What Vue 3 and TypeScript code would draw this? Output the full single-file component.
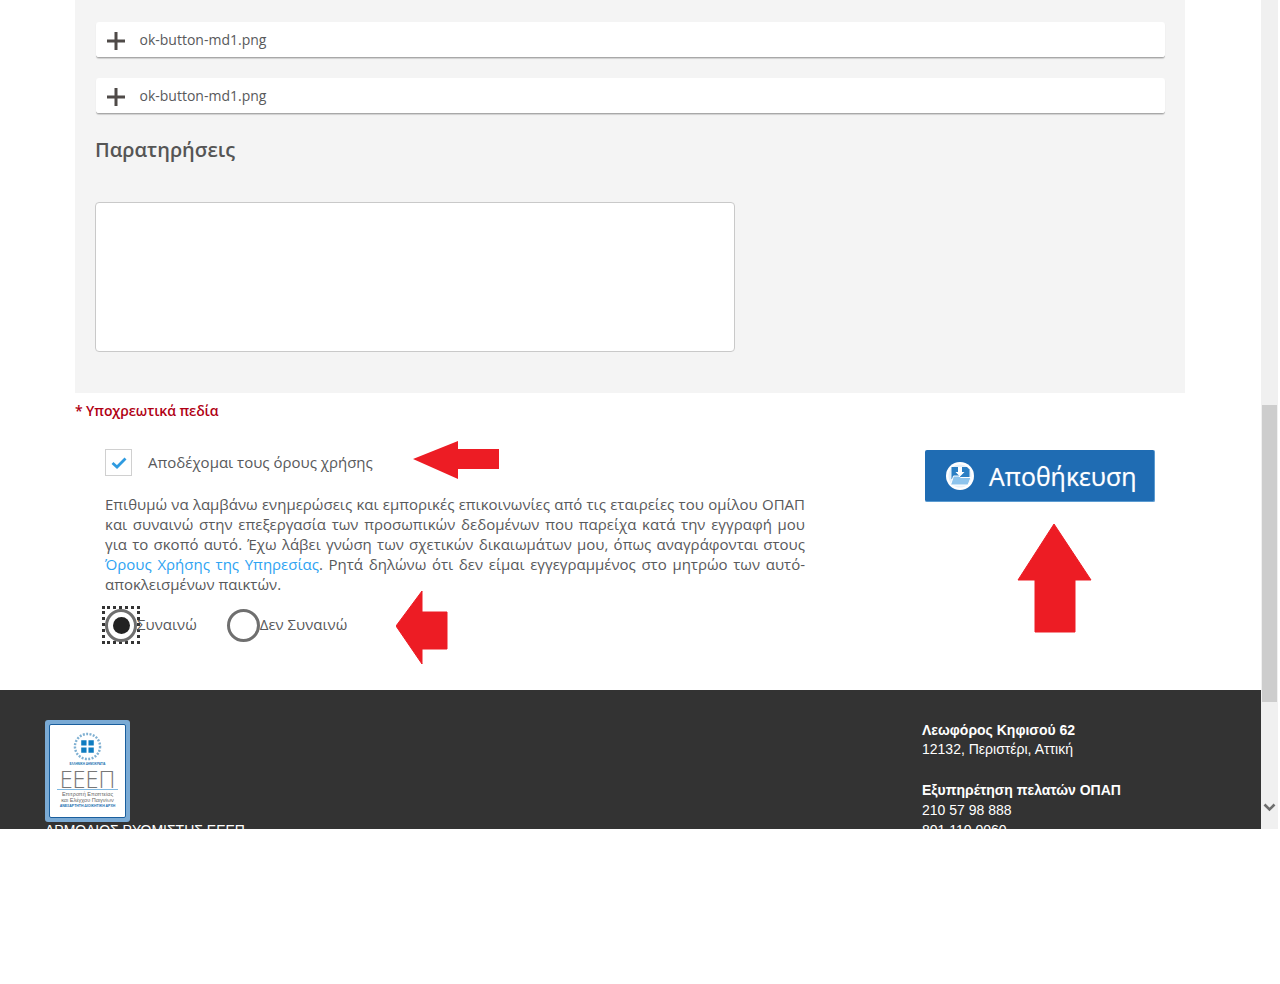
<script setup lang="ts">
const files: string[] = ['ok-button-md1.png', 'ok-button-md1.png']
</script>

<template>
  <div class="window">
    <main class="page">
      <section class="panel">
        <div v-for="(f, i) in files" :key="i" class="file-row">
          <svg class="plus" width="18" height="18" viewBox="0 0 18 18"><path d="M9 0v18M0 9h18" stroke="#4f4a48" stroke-width="3" fill="none" /></svg>
          <span class="file-name">{{ f }}</span>
        </div>
        <h3 class="notes-title">Παρατηρήσεις</h3>
        <textarea class="notes"></textarea>
      </section>
      <p class="required">* Υποχρεωτικά πεδία</p>
      <section class="consent">
        <div class="consent-left">
          <div class="terms">
            <span class="check">
              <svg width="16" height="12" viewBox="0 0 16 12"><path d="M1.500 6l4.500 4 8.500-8.500" stroke="#2f9be0" stroke-width="2.800" fill="none" /></svg>
            </span>
            <span class="terms-text">Αποδέχομαι τους όρους χρήσης</span>
          </div>
          <p class="legal">Επιθυμώ να λαμβάνω ενημερώσεις και εμπορικές επικοινωνίες από τις εταιρείες του ομίλου ΟΠΑΠ και συναινώ στην επεξεργασία των προσωπικών δεδομένων που παρείχα κατά την εγγραφή μου για το σκοπό αυτό. Έχω λάβει γνώση των σχετικών δικαιωμάτων μου, όπως αναγράφονται στους <a class="link">Όρους Χρήσης της Υπηρεσίας</a>. Ρητά δηλώνω ότι δεν είμαι εγγεγραμμένος στο μητρώο των αυτό-αποκλεισμένων παικτών.</p>
          <div class="radios">
            <label class="radio-item first">
              <span class="focus"><span class="radio on"><span class="dot"></span></span></span>
              <span class="radio-text">Συναινώ</span>
            </label>
            <label class="radio-item">
              <span class="radio"></span>
              <span class="radio-text">Δεν Συναινώ</span>
            </label>
          </div>
        </div>
        <div class="consent-right">
          <button class="save" type="button">
            <svg width="30" height="30" viewBox="0 0 30 30">
              <circle cx="15" cy="15" r="14" fill="#fff" />
              <circle cx="15" cy="15" r="11.500" fill="#e4f1fb" />
              <path d="M6.500 6h15.500l2.500 2.500V18h-18z" fill="#2b7fc4" />
              <path d="M5.500 24l3-9h5.500l1.500 1.500H26l-3 7.500z" fill="#8cc3ec" stroke="#fff" stroke-width="1" />
              <path d="M13 6h4v5h2.500L15 15.500 10.500 11H13z" fill="#fff" />
            </svg>
            <span class="save-text">Αποθήκευση</span>
          </button>
        </div>
      </section>
      <footer class="footer">
        <div class="footer-left">
          <div class="logo">
            <div class="logo-inner">
              <svg class="emblem" width="29" height="29" viewBox="0 0 30 30">
                <circle cx="15" cy="15" r="13" fill="none" stroke="#7fb0d2" stroke-width="2.500" stroke-dasharray="2 1.500" />
                <path d="M8.500 8.500h5.500v5.500H8.500zM16 8.500h5.500v5.500H16zM8.500 16h5.500v5.500H8.500zM16 16h5.500v5.500H16z" fill="#0f7cc0" />
              </svg>
              <div class="logo-gov">ΕΛΛΗΝΙΚΗ ΔΗΜΟΚΡΑΤΙΑ</div>
              <div class="logo-name">ΕΕΕΠ</div>
              <div class="logo-line">Επιτροπή Εποπτείας<br />και Ελέγχου Παιγνίων</div>
              <div class="logo-auth">ΑΝΕΞΑΡΤΗΤΗ ΔΙΟΙΚΗΤΙΚΗ ΑΡΧΗ</div>
            </div>
          </div>
          <div class="regulator">ΑΡΜΟΔΙΟΣ ΡΥΘΜΙΣΤΗΣ ΕΕΕΠ</div>
        </div>
        <div class="footer-right">
          <b>Λεωφόρος Κηφισού 62</b>
          <div class="addr">12132, Περιστέρι, Αττική</div>
          <b class="gap">Εξυπηρέτηση πελατών ΟΠΑΠ</b>
          <div>210 57 98 888</div>
          <div>801 110 0060</div>
        </div>
      </footer>
      <svg class="arrow a1" width="88" height="38" viewBox="0 0 88 38"><path d="M1 18L46 0v8h41v20H46l0 10z" fill="#ed1c24" /></svg>
      <svg class="arrow a2" width="52" height="74" viewBox="0 0 52 74"><path d="M0 36L26 1v21h25v37H26v15z" fill="#ed1c24" stroke="#ed1c24" stroke-linejoin="round" /></svg>
      <svg class="arrow a3" width="76" height="110" viewBox="0 0 76 110"><path d="M37 1L74 57H58v52H18V57H1z" fill="#ed1c24" stroke="#ed1c24" stroke-linejoin="round" /></svg>
    </main>
    <aside class="scrollbar">
      <div class="thumb"></div>
      <svg class="chev" width="13" height="9" viewBox="0 0 13 9"><path d="M1.500 1.500l5 5 5-5" stroke="#6e6e6e" stroke-width="2.600" fill="none" /></svg>
    </aside>
  </div>
</template>

<style scoped>
.window {
  width: 1278px;
  height: 829px;
  display: flex;
  overflow: hidden;
  font-family: "Open Sans", "Noto Sans", sans-serif;
  color: #58595b;
  font-size: 15px;
}
.page {
  width: 1261px;
  position: relative;
  flex: none;
  background: #fff;
}
.panel {
  margin: 0 76px 0 75px;
  height: 393px;
  box-sizing: border-box;
  padding: 22px 20px 0 20px;
  background: #f4f4f4;
}
.file-row {
  height: 36px;
  margin: 0 0 20px 1px;
  box-sizing: border-box;
  background: #fff;
  border-radius: 3px;
  border-bottom: 1px solid #a8a8a8;
  box-shadow: 0 1px 1px rgba(0, 0, 0, 0.15);
  display: flex;
  align-items: center;
  padding-left: 11px;
  font-size: 14px;
}
.plus { margin-top: 2px; }
.file-name { margin-left: 14.500px; }
.notes-title {
  margin: 22px 0 0;
  font-size: 20px;
  line-height: 27px;
  font-weight: 600;
  color: #555;
}
.notes {
  display: block;
  margin-top: 39px;
  width: 640px;
  height: 150px;
  box-sizing: border-box;
  background: #fff;
  border: 1px solid #c9c9c9;
  border-radius: 4px;
  resize: none;
  outline: none;
}
.required {
  margin: 0 0 0 75px;
  padding-top: 8px;
  font-size: 14px;
  line-height: 19px;
  font-weight: 600;
  letter-spacing: -0.1px;
  color: #b00014;
}
.consent {
  display: flex;
  justify-content: space-between;
  height: 270px;
  box-sizing: border-box;
  padding: 29px 106px 0 105px;
}
.consent-left { width: 700px; }
.terms {
  display: flex;
  align-items: center;
  gap: 16px;
  font-size: 15px;
  line-height: 28px;
}
.terms-text { margin-top: -2px; }
.check {
  width: 27px;
  height: 27px;
  box-sizing: border-box;
  border: 1px solid #d0d0d0;
  display: flex;
  align-items: center;
  justify-content: center;
}
.legal {
  margin: 18px 0 0;
  font-size: 15px;
  line-height: 20px;
  text-align: justify;
}
.link { color: #2ea3f2; }
.radios {
  display: flex;
  align-items: center;
  margin-top: 15px;
  height: 32px;
}
.radio-item {
  display: flex;
  align-items: center;
}
.radio-text { margin-top: -2px; }
.radio-item.first { margin-right: 30px; }
.focus {
  width: 38px;
  height: 38px;
  margin-left: -3px;
  margin-right: -3px;
  box-sizing: border-box;
  border: 3px dotted #333;
  display: flex;
  align-items: center;
  justify-content: center;
}
.radio {
  width: 33px;
  height: 33px;
  box-sizing: border-box;
  border: 3px solid #6f6f6f;
  border-radius: 50%;
  display: flex;
  align-items: center;
  justify-content: center;
  background: #fff;
}
.dot {
  width: 17px;
  height: 17px;
  border-radius: 50%;
  background: #222;
}
.consent-right { padding-top: 1px; }
.save {
  width: 230px;
  height: 52px;
  border: 0;
  border-right: 1px solid #5b9bd1;
  border-bottom: 1px solid #5b9bd1;
  border-radius: 2px;
  background: #1f6cb3;
  color: #fff;
  display: flex;
  align-items: center;
  gap: 14px;
  padding: 0 0 0 20px;
  font-family: "Open Sans", "Noto Sans", sans-serif;
  font-size: 24.900px;
}
.save-text { text-shadow: 0 0 1px rgba(255, 255, 255, 0.6); }
.footer {
  height: 139px;
  overflow: hidden;
  background: #333;
  color: #fff;
  display: flex;
  justify-content: space-between;
  padding: 30px 0 0 45px;
  box-sizing: border-box;
  font-family: "Liberation Sans", Arial, sans-serif;
  font-size: 14px;
  line-height: 20px;
}
.footer-left { width: 300px; }
.logo {
  width: 85px;
  height: 102px;
  box-sizing: border-box;
  padding: 4px;
  background: #7aaad4;
  border-radius: 3px;
}
.logo-inner {
  height: 94px;
  box-sizing: border-box;
  background: #fff;
  border: 1px solid #1a5f9e;
  border-radius: 2px;
  text-align: center;
  color: #777;
  padding-top: 7px;
  line-height: 1;
  overflow: hidden;
}
.emblem { display: block; margin: 0 auto; }
.logo-gov { font-size: 3px; line-height: 3px; color: #1a6fb0; margin-top: 2px; font-weight: 700; }
.logo-name {
  font-family: "Open Sans", sans-serif;
  font-weight: 300;
  font-size: 23.500px;
  color: #777;
  margin: 3px 7px 0;
  line-height: 20px;
  border-bottom: 1px solid #7fb8e0;
}
.logo-line { font-size: 5.500px; line-height: 6px; margin-top: 1px; color: #666; }
.logo-auth { font-size: 3.500px; color: #1a6fb0; margin-top: 2px; font-weight: 700; }
.regulator { margin-top: -2px; line-height: 20px; }
.footer-right {
  width: 339px;
  display: flex;
  flex-direction: column;
  align-items: flex-start;
}
.addr { margin-top: -1px; }
.gap { margin-top: 21px; }
.arrow { position: absolute; }
.a1 { left: 412px; top: 441px; }
.a2 { left: 396px; top: 590px; }
.a3 { left: 1017px; top: 523px; }
.scrollbar {
  width: 17px;
  flex: none;
  height: 829px;
  box-sizing: border-box;
  background: #f0f0f0;
  padding: 405px 1px 0;
  position: relative;
}
.thumb { height: 297px; background: #cdcdcd; }
.chev { position: absolute; left: 2px; bottom: 17px; }
</style>

<style>
html, body { background: #fff; }
</style>
